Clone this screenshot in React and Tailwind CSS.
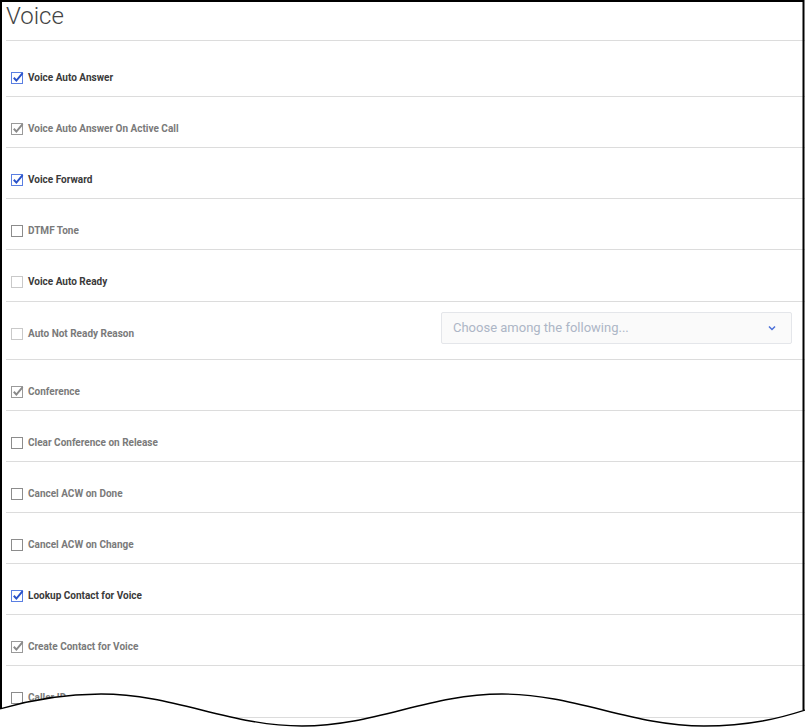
import React from 'react';

const ROWS = [
  { label: 'Voice Auto Answer', state: 'on', tone: 'dark', first: true },
  { label: 'Voice Auto Answer On Active Call', state: 'on-muted', tone: 'muted' },
  { label: 'Voice Forward', state: 'on', tone: 'dark' },
  { label: 'DTMF Tone', state: 'off', tone: 'muted' },
  { label: 'Voice Auto Ready', state: 'off-light', tone: 'dark', tall: true },
  { label: 'Auto Not Ready Reason', state: 'off-light', tone: 'muted', select: true },
  { label: 'Conference', state: 'on-muted', tone: 'muted' },
  { label: 'Clear Conference on Release', state: 'off', tone: 'muted' },
  { label: 'Cancel ACW on Done', state: 'off', tone: 'muted' },
  { label: 'Cancel ACW on Change', state: 'off', tone: 'muted' },
  { label: 'Lookup Contact for Voice', state: 'on', tone: 'dark' },
  { label: 'Create Contact for Voice', state: 'on-muted', tone: 'muted' },
  { label: 'Caller ID', state: 'off', tone: 'muted', tall: true },
];

const Check = ({ state }) => {
  const box = {
    on: '#5a7fe2',
    'on-muted': '#9a9a9a',
    off: '#8c8c8c',
    'off-light': '#c9c9c9',
  }[state];
  const tick = state === 'on' ? '#2a52c9' : '#8a8a8a';
  const checked = state.startsWith('on');
  return (
    <svg width="14" height="14" viewBox="0 0 14 14" className="shrink-0">
      <rect x="0.5" y="1.5" width="11" height="11" fill="#fff" stroke={box} />
      {checked && (
        <path d="M2.8 6.8 L5.4 9.6 L11.6 2.2" fill="none" stroke={tick} strokeWidth="2" />
      )}
    </svg>
  );
};

const Row = ({ row }) => (
  <div className="flex items-start justify-between border-b border-[#dcdcdc]">
    <div
      className={`flex items-center gap-[3px] pl-[5px] ${row.first ? 'pt-[30px]' : 'pt-[25px]'} ${row.tall ? 'pb-3' : 'pb-[11px]'}`}
    >
      <Check state={row.state} />
      <span
        className={`text-[10px] font-bold leading-[14px] ${row.tone === 'dark' ? 'text-[#3a3a3a]' : 'text-[#7a7a7a]'}`}
      >
        {row.label}
      </span>
    </div>
    {row.select && (
      <div className="mt-[10px] mb-[15px] mr-[13px] flex h-[32px] w-[351px] items-center justify-between rounded-[2px] border border-[#e4e6ea] bg-[#fafafa] pl-[11px] pr-[15px]">
        <span className="text-[13px] text-[#adb6c6]">Choose among the following...</span>
        <svg width="8" height="6" viewBox="0 0 8 6">
          <path d="M1 1.5 L4 4.5 L7 1.5" fill="none" stroke="#4a6fd8" strokeWidth="1.5" />
        </svg>
      </div>
    )}
  </div>
);

export default function App() {
  return (
    <div
      className="relative h-[728px] w-[805px] overflow-hidden bg-white"
      style={{ fontFamily: 'Roboto, "Liberation Sans", sans-serif' }}
    >
      <div className="pl-[6px]">
        <div className="h-[41px] border-b border-[#dcdcdc]">
          <h1 className="text-[24px] font-light leading-8 text-[#444]">Voice</h1>
        </div>
        {ROWS.map((row) => (
          <Row key={row.label} row={row} />
        ))}
      </div>

      {/* torn paper edge */}
      <svg
        className="pointer-events-none absolute inset-0"
        width="805"
        height="728"
        viewBox="0 0 805 728"
      >
        <path
          d="M0 709 C30 700 60 694 101 694 C174 694 229 726 302 726 C375 726 429 694 502 694 C575 694 631 726 704 726 C750 726 780 718 805 710 L805 728 L0 728 Z"
          fill="#fff"
        />
        <path
          d="M1 709 L1 1 L803.5 1 L803.5 710"
          fill="none"
          stroke="#000"
          strokeWidth="2"
        />
        <path
          d="M0 709 C30 700 60 694 101 694 C174 694 229 726 302 726 C375 726 429 694 502 694 C575 694 631 726 704 726 C750 726 780 718 805 710"
          fill="none"
          stroke="#000"
          strokeWidth="1.3"
        />
      </svg>
    </div>
  );
}
